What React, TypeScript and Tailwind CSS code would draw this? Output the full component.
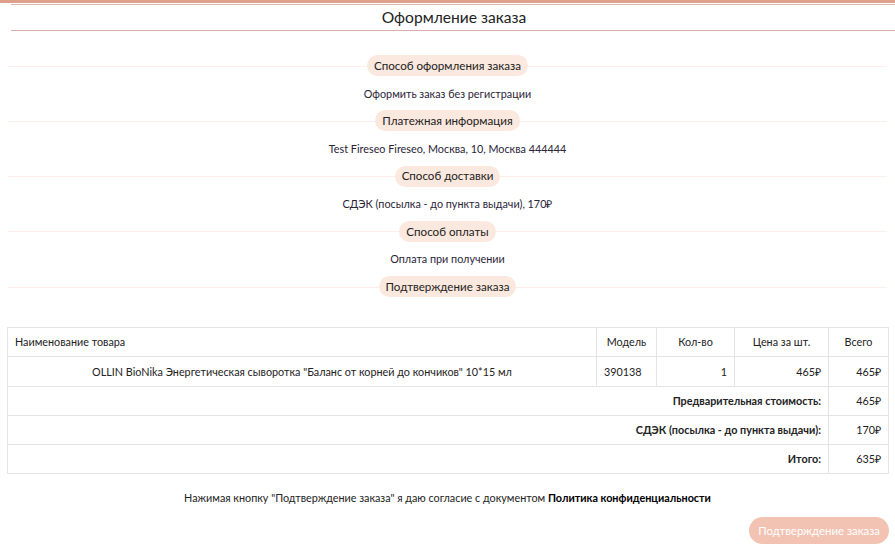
import React from "react";

// Checkout summary: stacked sections with peach pill headings, order table and confirm button.
const sections = [
  { title: "Способ оформления заказа", value: "Оформить заказ без регистрации" },
  { title: "Платежная информация", value: "Test Fireseo Fireseo, Москва, 10, Москва 444444" },
  { title: "Способ доставки", value: "СДЭК (посылка - до пункта выдачи), 170₽" },
  { title: "Способ оплаты", value: "Оплата при получении" },
];

function Pill({ children }: { children: React.ReactNode }) {
  return (
    <div className="relative flex h-[21px] items-center justify-center">
      <div className="absolute inset-x-0 top-1/2 h-px bg-[#fdefe8]" />
      <span className="relative flex h-[21px] items-center rounded-full bg-[#fbe8de] px-[7px] text-[11.6px] text-[#222]">
        {children}
      </span>
    </div>
  );
}

const totals = [
  { label: "Предварительная стоимость:", value: "465₽" },
  { label: "СДЭК (посылка - до пункта выдачи):", value: "170₽" },
  { label: "Итого:", value: "635₽" },
];

export default function App() {
  const td = "border border-[#e4e4e4] px-[7px] text-[10.8px] text-[#222]";
  return (
    <div className="min-h-[556px] w-[895px] bg-white font-['Lato','Open_Sans',sans-serif]">
      <div className="h-[3px] bg-[#dea08a]" />
      <div className="ml-[11px] mt-[1px] h-px bg-[#d6b6b4]" />
      <div className="ml-[11px] flex h-[26px] items-center justify-center border-b border-[#d9b0ac] pl-[2px] text-[15.6px] text-[#222]">
        Оформление заказа
      </div>

      <div className="mx-[8px] mt-[24px] flex flex-col">
        {sections.map((s) => (
          <div key={s.title} className="flex flex-col">
            <Pill>{s.title}</Pill>
            <div className="flex h-[34.3px] items-center justify-center pt-[1px] text-[10.8px] text-[#2a2438]">
              {s.value}
            </div>
          </div>
        ))}
        <Pill>Подтверждение заказа</Pill>
      </div>

      <table className="ml-[7px] mt-[30px] w-[882px] border-collapse">
        <thead>
          <tr className="h-[29px]">
            <td className={`${td} text-left`}>Наименование товара</td>
            <td className={`${td} w-[60px] text-center`}>Модель</td>
            <td className={`${td} w-[78px] text-center`}>Кол-во</td>
            <td className={`${td} w-[94px] text-center`}>Цена за шт.</td>
            <td className={`${td} w-[60px] text-center`}>Всего</td>
          </tr>
        </thead>
        <tbody>
          <tr className="h-[30px]">
            <td className={`${td} text-center`}>
              OLLIN BioNika Энергетическая сыворотка "Баланс от корней до кончиков" 10*15 мл
            </td>
            <td className={`${td} text-left`}>390138</td>
            <td className={`${td} text-right`}>1</td>
            <td className={`${td} text-right`}>465₽</td>
            <td className={`${td} text-right`}>465₽</td>
          </tr>
          {totals.map((t) => (
            <tr key={t.label} className="h-[29px]">
              <td colSpan={4} className={`${td} text-right font-bold`}>
                {t.label}
              </td>
              <td className={`${td} text-right`}>{t.value}</td>
            </tr>
          ))}
        </tbody>
      </table>

      <p className="mt-[16px] text-center text-[10.8px] text-[#222]">
        Нажимая кнопку "Подтверждение заказа" я даю согласие с документом{" "}
        <b className="text-black">Политика конфиденциальности</b>
      </p>

      <div className="mr-[6px] mt-[11px] flex justify-end">
        <button className="h-[27px] rounded-full bg-[#f2c3b3] px-[9px] text-[11.4px] text-white">
          Подтверждение заказа
        </button>
      </div>
    </div>
  );
}
